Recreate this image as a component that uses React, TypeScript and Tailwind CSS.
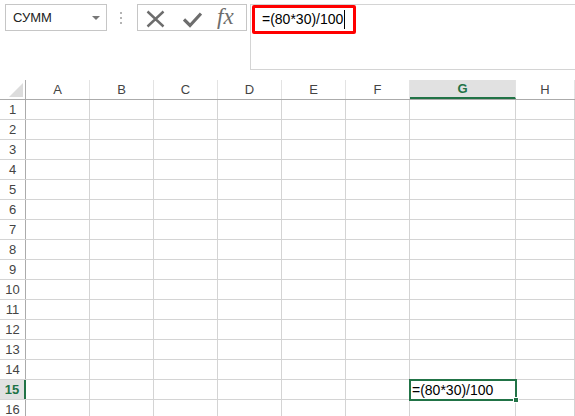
import React from 'react';

const columns = [
  { key: 'A', w: 'w-[64px]' },
  { key: 'B', w: 'w-[64px]' },
  { key: 'C', w: 'w-[64px]' },
  { key: 'D', w: 'w-[64px]' },
  { key: 'E', w: 'w-[64px]' },
  { key: 'F', w: 'w-[64px]' },
  { key: 'G', w: 'w-[106px]' },
  { key: 'H', w: 'flex-1' },
];

const rows = Array.from({ length: 16 }, (_, i) => i + 1);
const ACTIVE_ROW = 15;
const FORMULA = '=(80*30)/100';

function FormulaIcons() {
  return (
    <div className="ml-[15px] w-[110px] h-[27px] border border-[#c6c6c6] relative">
      {/* отмена */}
      <svg className="absolute left-[8px] top-[5px]" width="19" height="18" viewBox="0 0 19 18">
        <path d="M1.5 1.5 L17.5 16.5 M17.5 1.5 L1.5 16.5" stroke="#6d6d6d" strokeWidth="2.4" fill="none" />
      </svg>
      {/* ввод */}
      <svg className="absolute left-[45px] top-[7px]" width="19" height="16" viewBox="0 0 19 16">
        <path d="M1 7.5 L7 13.5 L18 1.5" stroke="#6d6d6d" strokeWidth="3.2" fill="none" strokeLinejoin="miter" />
      </svg>
      <span
        className="absolute left-[79px] -top-[1px] text-[23px] italic leading-[26px] text-[#6d6d6d]"
        style={{ fontFamily: '"Liberation Serif", serif' }}
      >
        fx
      </span>
    </div>
  );
}

export default function App() {
  return (
    <div
      className="w-[575px] h-[416px] overflow-hidden bg-white"
      style={{ fontFamily: '"Liberation Sans", "Noto Sans", sans-serif' }}
    >
      {/* строка формул */}
      <div className="h-[80px] flex items-start pt-[4px]">
        <div className="ml-[5px] w-[102px] h-[27px] border border-[#c6c6c6] flex items-center pl-[7px] pr-[6px]">
          <span className="text-[13px] text-[#222] flex-1">СУММ</span>
          <span className="w-0 h-0 border-l-[4px] border-r-[4px] border-t-[4px] border-l-transparent border-r-transparent border-t-[#777] mt-[1px]" />
        </div>
        <div className="ml-[13px] mt-[8px] flex flex-col gap-[3px]">
          <span className="w-[2px] h-[2px] bg-[#b4b4b4]" />
          <span className="w-[2px] h-[2px] bg-[#b4b4b4]" />
          <span className="w-[2px] h-[2px] bg-[#b4b4b4]" />
        </div>
        <FormulaIcons />
        <div className="ml-[3px] flex-1 h-[66px] border-l border-t border-b border-[#d4d4d4] pl-[1px]">
          <div className="w-[104px] h-[29px] border-[3px] border-[#ff0000] rounded-[2px] flex items-center pl-[7px]">
            <span className="text-[14px] text-black">{FORMULA}</span>
            <span className="w-[1px] h-[19px] bg-black ml-[1px]" />
          </div>
        </div>
      </div>

      {/* заголовки столбцов */}
      <div className="flex h-[20px] border-b border-[#ababab]">
        <div className="w-[26px] border-r border-[#ababab] relative">
          <svg className="absolute left-[9px] top-[3px]" width="14" height="14" viewBox="0 0 14 14">
            <polygon points="14,0 14,14 0,14" fill="#dcdcdc" />
          </svg>
        </div>
        {columns.map((c) => {
          const active = c.key === 'G';
          return (
            <div
              key={c.key}
              className={
                c.w +
                ' flex items-center justify-center text-[13px] border-r border-[#e3e3e3] ' +
                (active ? 'bg-[#e1e1e1] text-[#217346] font-bold border-b-2 border-b-[#217346]' : 'text-[#444]')
              }
            >
              {c.key}
            </div>
          );
        })}
      </div>

      {/* строки */}
      {rows.map((r) => {
        const activeRow = r === ACTIVE_ROW;
        return (
          <div key={r} className="flex h-[20px] border-b border-[#d4d4d4]">
            <div
              className={
                'w-[26px] flex items-center justify-center text-[13px] ' +
                (activeRow
                  ? 'bg-[#e1e1e1] text-[#217346] font-bold border-r-2 border-[#217346]'
                  : 'text-[#444] border-r border-[#ababab]')
              }
            >
              {r}
            </div>
            {columns.map((c) => {
              const selected = activeRow && c.key === 'G';
              return (
                <div key={c.key} className={c.w + ' border-r border-[#d4d4d4] relative'}>
                  {selected && (
                    <div className="absolute -left-[1px] -top-[1px] w-[108px] h-[22px] border-2 border-[#217346] flex items-center pl-[1px] z-10">
                      <span className="text-[14px] text-black">{FORMULA}</span>
                      <span className="absolute -right-[4px] -bottom-[4px] w-[6px] h-[6px] bg-[#217346] border border-white" />
                    </div>
                  )}
                </div>
              );
            })}
          </div>
        );
      })}
    </div>
  );
}
